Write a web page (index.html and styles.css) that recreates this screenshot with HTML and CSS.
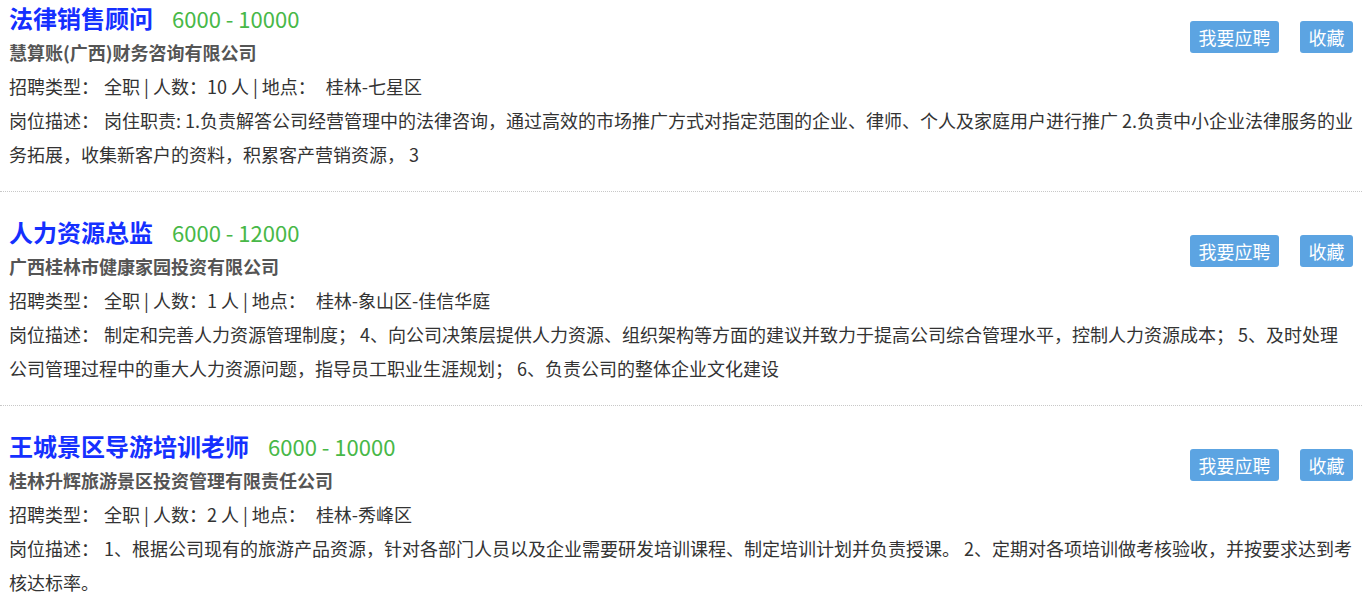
FILE: index.html
```html
<!DOCTYPE html>
<html lang="zh-CN">
<head>
<meta charset="utf-8">
<title>职位列表</title>
<link rel="stylesheet" href="styles.css">
</head>
<body>
<div class="job-list">
  <div class="job">
    <div class="actions">
      <a class="btn">我要应聘</a>
      <a class="btn">收藏</a>
    </div>
    <div class="line title-row"><span class="title">法律销售顾问</span><span class="salary">6000 - 10000</span></div>
    <div class="line company">慧算账(广西)财务咨询有限公司</div>
    <div class="line"><span class="label">招聘类型：</span>全职 | 人数：10 人 | 地点：<span class="label-gap"></span>桂林-七星区</div>
    <div class="line desc"><span class="label">岗位描述：</span>岗住职责: 1.负责解答公司经营管理中的法律咨询，通过高效的市场推广方式对指定范围的企业、律师、个人及家庭用户进行推广 2.负责中小企业法律服务的业务拓展，收集新客户的资料，积累客产营销资源， 3</div>
  </div>
  <div class="job">
    <div class="actions">
      <a class="btn">我要应聘</a>
      <a class="btn">收藏</a>
    </div>
    <div class="line title-row"><span class="title">人力资源总监</span><span class="salary">6000 - 12000</span></div>
    <div class="line company">广西桂林市健康家园投资有限公司</div>
    <div class="line"><span class="label">招聘类型：</span>全职 | 人数：1 人 | 地点：<span class="label-gap"></span>桂林-象山区-佳信华庭</div>
    <div class="line desc"><span class="label">岗位描述：</span>制定和完善人力资源管理制度； 4、向公司决策层提供人力资源、组织架构等方面的建议并致力于提高公司综合管理水平，控制人力资源成本； 5、及时处理公司管理过程中的重大人力资源问题，指导员工职业生涯规划； 6、负责公司的整体企业文化建设</div>
  </div>
  <div class="job">
    <div class="actions">
      <a class="btn">我要应聘</a>
      <a class="btn">收藏</a>
    </div>
    <div class="line title-row"><span class="title">王城景区导游培训老师</span><span class="salary">6000 - 10000</span></div>
    <div class="line company">桂林升辉旅游景区投资管理有限责任公司</div>
    <div class="line"><span class="label">招聘类型：</span>全职 | 人数：2 人 | 地点：<span class="label-gap"></span>桂林-秀峰区</div>
    <div class="line desc"><span class="label">岗位描述：</span>1、根据公司现有的旅游产品资源，针对各部门人员以及企业需要研发培训课程、制定培训计划并负责授课。 2、定期对各项培训做考核验收，并按要求达到考核达标率。</div>
  </div>
</div>
</body>
</html>
```

FILE: styles.css
```css
html, body {
  margin: 0;
  padding: 0;
  background: #fff;
}
body {
  font-family: "Noto Sans CJK SC", "Noto Sans", sans-serif;
  font-size: 18px;
  color: #333;
}
.job-list {
  display: flex;
  flex-direction: column;
}
.job {
  padding: 23px 6px 20px 9px;
  border-bottom: 1px dotted #c8c8c8;
}
.job:first-child {
  padding-top: 1px;
}
.job:last-child {
  border-bottom: none;
}
.line {
  line-height: 34px;
}
.title-row {
  display: flex;
  align-items: center;
  height: 34px;
}
.title {
  font-size: 24px;
  font-weight: bold;
  color: #1530ff;
  margin-right: 19px;
}
.salary {
  font-size: 22px;
  color: #48b848;
}
.company {
  font-weight: bold;
  color: #555;
}
.label {
  margin-right: 5px;
}
.label-gap {
  display: inline-block;
  width: 10px;
}
.actions {
  float: right;
  margin-top: 20px;
  margin-right: 3px;
  display: flex;
  gap: 21px;
}
.btn {
  display: block;
  height: 32px;
  line-height: 32px;
  padding: 0 8.5px;
  background: #5ca4e2;
  color: #fff;
  font-size: 18px;
  border-radius: 3px;
  cursor: pointer;
}
```
